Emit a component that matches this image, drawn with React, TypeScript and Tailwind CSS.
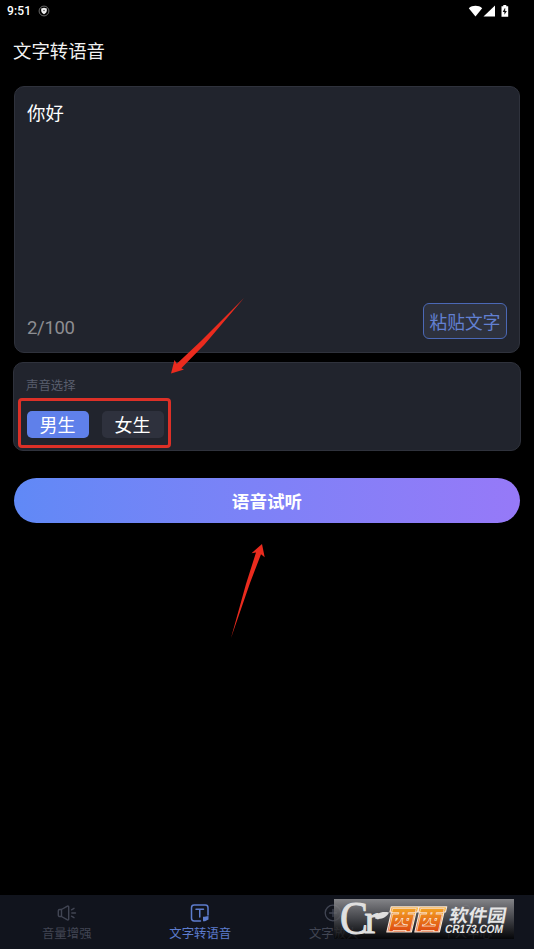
import { useState } from "react";

const VOICES = ["男生", "女生"];

function StatusBar() {
  return (
    <header className="flex h-[22px] items-center pl-[7px] pr-[24px] text-white">
      <span className="font-[Roboto] text-[12px] font-medium leading-none tracking-[0.15px]">9:51</span>
      <svg className="ml-[7px]" width="12" height="12" viewBox="0 0 12 12">
        <circle cx="6" cy="6" r="4.9" fill="none" stroke="#777" strokeWidth="0.9" />
        <path d="M3.2 3.6 6 2.7l2.8.9v2C8.8 7.300 7.500 8.500 6 9.200 4.500 8.500 3.200 7.300 3.200 5.600Z" fill="#eee" />
        <circle cx="6" cy="5.5" r="0.8" fill="#555" />
      </svg>
      <svg className="ml-auto" width="42" height="14" viewBox="0 0 42 14" fill="#fff">
        <path d="M.8 4.200C4.500 1 10.500 1 14.200 4.200L7.500 12.500Z" />
        <path d="M15.500 12.500 27 1.500v11Z" />
        <path d="M33.500 2.200H35.300V1h3v1.200H40.200V12.800H33.500Z" />
        <path d="M36.900 4 34.700 8h1.700v2.800L38.900 7h-1.700V4Z" fill="#111" />
      </svg>
    </header>
  );
}

function VolumeIcon() {
  return (
    <svg width="20" height="18" viewBox="0 0 20 18" fill="none" stroke="currentColor" strokeWidth="1.400" strokeLinecap="round" strokeLinejoin="round">
      <path d="M4.500 5.500 10 2.300C11 1.800 11.700 2.200 11.700 3v12c0 .8-.7 1.200-1.700.7L4.500 12.500H2.700c-.8 0-1.400-.5-1.400-1.300V6.800c0-.8.6-1.300 1.400-1.300ZM4.500 5.500v7" />
      <path d="M14.500 5.800 17 4.300M14.800 9h3.700M14.500 12.200l2.500 1.500" />
    </svg>
  );
}

function SpeechIcon() {
  return (
    <svg width="20" height="18" viewBox="0 0 20 18" fill="none" stroke="currentColor" strokeWidth="1.500" strokeLinecap="round">
      <path d="M10.500 17H4.200C2.500 17 1.500 16 1.500 14.300V3.700C1.500 2 2.500 1 4.200 1h11.100C17 1 18 2 18 3.700V11" />
      <path d="M6 5.300h7.500M9.750 5.300V13" />
      <path d="M13 12.700h1.500l4-.7v3.500L15 17.300h-2Z" fill="currentColor" stroke="none" />
    </svg>
  );
}

function ZoomIcon() {
  return (
    <svg width="20" height="18" viewBox="0 0 20 18" fill="none" stroke="currentColor" strokeWidth="1.3" strokeLinecap="round">
      <circle cx="9" cy="9" r="7.800" />
      <path d="M5.500 9h7M9 5.500v7" />
    </svg>
  );
}

function UserIcon() {
  return (
    <svg width="20" height="18" viewBox="0 0 20 18" fill="none" stroke="currentColor" strokeWidth="1.3">
      <circle cx="9" cy="5" r="3.700" />
      <path d="M2 17c0-4 3-6.500 7-6.500s7 2.500 7 6.500" />
    </svg>
  );
}

const TABS = [
  { label: "音量增强", icon: VolumeIcon },
  { label: "文字转语音", icon: SpeechIcon },
  { label: "文字放大", icon: ZoomIcon },
  { label: "个人中心", icon: UserIcon },
];

function Watermark() {
  return (
    <svg className="absolute left-[334px] top-[899px]" width="180" height="40" viewBox="0 0 180 40">
      <defs>
        <linearGradient id="plate" x1="0" y1="0" x2="0" y2="1">
          <stop offset="0" stopColor="#97979a" stopOpacity="0.86" />
          <stop offset="0.5" stopColor="#505155" stopOpacity="0.78" />
          <stop offset="1" stopColor="#000" stopOpacity="0.7" />
        </linearGradient>
        <linearGradient id="orange" gradientUnits="userSpaceOnUse" x1="0" y1="7" x2="0" y2="34">
          <stop offset="0" stopColor="#f5ab25" />
          <stop offset="1" stopColor="#dc4310" />
        </linearGradient>
      </defs>
      <rect width="180" height="40" fill="url(#plate)" />
      <g fill="#e0e0e0" stroke="#e0e0e0" strokeWidth="1" strokeLinejoin="round" fontFamily="Liberation Serif, serif">
        <text x="6" y="34.500" fontSize="46" textLength="28" lengthAdjust="spacingAndGlyphs">C</text>
        <text x="30.500" y="34.300" fontSize="42">r</text>
      </g>
      <path d="M41 19.500c1-5 6-7.500 14-6-2.500 5-8 7.500-14 6Z" fill="#e0e0e0" />
      {/* slanted backing and outlined characters */}
      <g transform="skewX(-13)" strokeLinejoin="round">
        <path d="M59 7.800H86.500V13H85V33H60.500V13H59ZM87 7.800H114.500V13H113V33H88.500V13H87Z" fill="url(#orange)" stroke="#f8e6d6" strokeWidth="1.200" />
        <g
          fill="url(#orange)"
          stroke="#fbe3cd"
          strokeWidth="1.600"
          className="[paint-order:stroke]"
          fontFamily="Noto Sans CJK SC, sans-serif"
          fontSize="25"
          fontWeight="900"
        >
          <text x="60.300" y="29.800">西</text>
          <text x="88.300" y="29.800">西</text>
        </g>
      </g>
      <g fill="#e6e6e6" transform="skewX(-10)">
        <text x="118.500" y="22.800" fontFamily="Noto Sans CJK SC, sans-serif" fontSize="18" fontWeight="700" textLength="57" lengthAdjust="spacingAndGlyphs">软件园</text>
        <text x="116.500" y="34.500" fontFamily="Liberation Sans, sans-serif" fontSize="12" fontWeight="700" textLength="58" lengthAdjust="spacingAndGlyphs">CR173.COM</text>
      </g>
    </svg>
  );
}

export default function App() {
  const [voice, setVoice] = useState("男生");

  return (
    <div className="relative flex h-[949px] w-[534px] flex-col overflow-hidden bg-black font-['Noto_Sans_CJK_SC',sans-serif]">
      <StatusBar />
      <h1 className="mt-[14px] pl-[13px] text-[18.400px] leading-[28px] text-[#f2f2f2]">文字转语音</h1>

      <main className="flex flex-1 flex-col">
        <section className="mx-[14px] mt-[22px] flex h-[267px] flex-col justify-between rounded-[10px] border border-[#2f323c] bg-[#21242d] px-[12px] pt-[11px] pb-[13px]">
          <p className="text-[18.400px] leading-[28px] text-white">你好</p>
          <div className="flex items-end justify-between">
            <span className="-mb-px font-[Roboto] text-[18.500px] leading-[23px] tracking-[-0.300px] text-[#8d8e92]">2/100</span>
            <button className="h-[36px] w-[84px] rounded-[6px] border border-[#4b68b5] bg-[#2e323e] pt-[2px] text-[17.700px] leading-none text-[#6280d2]">粘贴文字</button>
          </div>
        </section>

        <section className="mx-[13px] mt-[9px] h-[89px] rounded-[10px] border border-[#2f323c] bg-[#21242d] pl-[12px] pt-[13px]">
          <h2 className="text-[12.400px] leading-[18px] text-[#595e6e]">声音选择</h2>
          <div className="mt-[17px] flex gap-[13px] pl-[0.600px]">
            {VOICES.map((v) => (
              <button
                key={v}
                onClick={() => setVoice(v)}
                className={`h-[27px] w-[62px] rounded-[5px] text-[18px] leading-[27px] text-white ${v === voice ? "bg-[#5f80ea]" : "bg-[#2e313d]"}`}
              >
                {v}
              </button>
            ))}
          </div>
        </section>

        <button className="mx-[14px] mt-[27px] h-[44.500px] rounded-full bg-linear-to-r from-[#6089f6] to-[#9679f8] pt-[2px] text-[17.600px] font-bold text-white">语音试听</button>
      </main>

      <nav className="grid h-[54px] grid-cols-4 bg-[#11141d]">
        {TABS.map(({ label, icon: Icon }, i) => (
          <div key={label} className={`flex flex-col items-center pt-[9px] text-[12.400px] leading-[18px] ${i === 1 ? "text-[#5d7ccd]" : "text-[#414553]"}`}>
            <Icon />
            <span className="mt-[2px]">{label}</span>
          </div>
        ))}
      </nav>

      {/* highlight frame and pointers */}
      <div className="absolute left-[18px] top-[398px] h-[50px] w-[153px] rounded-[4px] border-[3px] border-[#dc3027]" />
      <svg className="pointer-events-none absolute left-0 top-0" width="534" height="949" viewBox="0 0 534 949" fill="#ea2b1e">
        <path d="M244 298 204.500 344.500 181.300 368.300 184 369.500 171 373.500 174.500 360 176.800 363.800 201 341Z" />
        <path d="M231 638 246 584 256 552.500 251.500 553.300 262 544 264.700 557.300 261 554.300 250 583Z" />
      </svg>

      <Watermark />
    </div>
  );
}
